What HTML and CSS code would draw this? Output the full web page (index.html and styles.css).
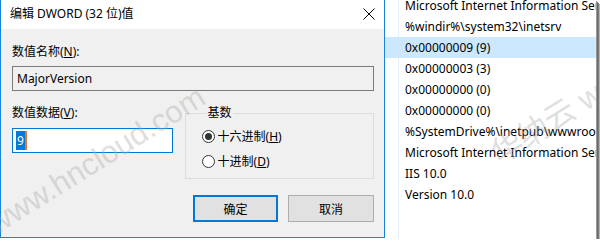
FILE: index.html
```html
<!DOCTYPE html>
<html lang="zh-CN">
<head>
  <meta charset="UTF-8" />
  <title>编辑 DWORD (32 位)值</title>
  <link rel="stylesheet" href="styles.css">
</head>
<body>
  <div class="frame">
    <div class="dialog">
      <div class="titlebar">
        <span class="title">编辑 DWORD (32 位)值</span>
        <svg class="close" width="12" height="12" viewBox="0 0 12 12">
          <path d="M0.5 0.5 L11.5 11.5 M11.5 0.5 L0.5 11.5" stroke="#000" stroke-width="1" fill="none"/>
        </svg>
      </div>
      <div class="content">
        <div class="label">数值名称(<u>N</u>):</div>
        <div class="namebox">MajorVersion</div>

        <div class="datarow">
          <div class="datacol">
            <div class="label">数值数据(<u>V</u>):</div>
            <div class="databox"><span class="sel">9</span><span class="caret"></span></div>
          </div>
          <fieldset class="group">
            <legend>基数</legend>
            <label class="radio"><input type="radio" name="base" checked> 十六进制(<u>H</u>)</label>
            <label class="radio"><input type="radio" name="base"> 十进制(<u>D</u>)</label>
          </fieldset>
        </div>

        <div class="buttons">
          <button class="btn default">确定</button>
          <button class="btn">取消</button>
        </div>
      </div>
    </div>

    <div class="list">
      <div class="row">Microsoft Internet Information Services</div>
      <div class="row">%windir%\system32\inetsrv</div>
      <div class="row selected">0x00000009 (9)</div>
      <div class="row">0x00000003 (3)</div>
      <div class="row">0x00000000 (0)</div>
      <div class="row">0x00000000 (0)</div>
      <div class="row">%SystemDrive%\inetpub\wwwroot</div>
      <div class="row">Microsoft Internet Information Services</div>
      <div class="row">IIS 10.0</div>
      <div class="row">Version 10.0</div>
    </div>

    <div class="watermark left">www.hncloud.com</div>
    <div class="watermark right">华纳云 www.hncloud.com</div>
  </div>
</body>
</html>
```

FILE: styles.css
```css
body {
  margin: 0;
  background: #fff;
  font-family: "Noto Sans", "Noto Sans CJK SC", sans-serif;
  font-size: 12px;
  color: #000;
}

.frame {
  position: relative;
  display: flex;
  width: 596px;
  height: 239px;
  overflow: hidden;
  box-shadow: 1px 1px 0 #9a9a9a, 2px 2px 0 #6a6a6a, 3px 3px 0 #7c7c7c, 4px 4px 0 #b4b4b4;
}

.dialog {
  width: 383px;
  height: 237px;
  border-left: 1px solid #1883d7;
  border-right: 1px solid #1883d7;
  border-bottom: 1px solid #1883d7;
  display: flex;
  flex-direction: column;
  flex-shrink: 0;
}

.titlebar {
  height: 29px;
  background: #fff;
  display: flex;
  align-items: center;
  justify-content: space-between;
  padding: 0 9px 0 9px;
}

.title {
  line-height: 16px;
  margin-top: -1px;
}

.close {
  margin-top: -2px;
}

.content {
  flex: 1;
  background: #f0f0f0;
  padding: 15px 10px 0 11px;
}

.label {
  line-height: 16px;
  height: 16px;
}

u {
  text-decoration: underline;
}

.namebox {
  margin-top: 6px;
  height: 23px;
  border: 1px solid #7a7a7a;
  background: #f0f0f0;
  padding-left: 4px;
  line-height: 23px;
}

.datarow {
  display: flex;
  margin-top: 14px;
}

.datacol {
  width: 162px;
}

.databox {
  margin-top: 7px;
  border: 1px solid #0078d7;
  background: #fff;
  padding: 2px 0 0 3px;
  box-sizing: border-box;
  height: 25px;
  display: flex;
  align-items: flex-start;
}

.sel {
  background: #0078d7;
  color: #fff;
  line-height: 19px;
  padding: 0 1px;
}

.caret {
  width: 2px;
  height: 19px;
  background: #e07a2a;
}

.group {
  margin: 0 0 0 12px;
  padding: 6px 0 0 16px;
  width: 173px;
  height: 66px;
  border: 1px solid #dcdcdc;
  border-radius: 0;
  min-width: 0;
}

.group legend {
  padding: 0 1px;
  margin-left: 5px;
  line-height: 16px;
}

.radio {
  display: flex;
  align-items: center;
  height: 18px;
  margin-bottom: 7px;
}

.radio input {
  appearance: none;
  width: 13px;
  height: 13px;
  margin: 0 3px 0 0;
  border: 1px solid #333;
  border-radius: 50%;
  background: #fff;
  display: grid;
  place-content: center;
}

.radio input:checked::before {
  content: "";
  width: 7px;
  height: 7px;
  border-radius: 50%;
  background: #333;
}

.buttons {
  display: flex;
  justify-content: flex-end;
  gap: 10px;
  margin-top: 16px;
}

.btn {
  width: 86px;
  height: 27px;
  font: inherit;
  color: #000;
  background: #e1e1e1;
  border: 1px solid #adadad;
  padding: 0;
}

.btn.default {
  width: 85px;
  border: 2px solid #0078d7;
}

.list {
  flex: 1;
  background: linear-gradient(to right, transparent 13px, #e6eef8 13px, #e6eef8 14px, transparent 14px), #fff;
  margin-top: -5px;
  height: 244px;
  overflow: hidden;
}

.row {
  height: 21px;
  line-height: 21px;
  padding-left: 20px;
  white-space: nowrap;
  overflow: hidden;
}

.row.selected {
  background: #cce8ff;
}

.watermark {
  position: absolute;
  font-family: "Liberation Sans", sans-serif;
  font-size: 31px;
  line-height: 36px;
  color: rgba(170, 170, 170, 0.4);
  white-space: nowrap;
  transform-origin: left bottom;
  transform: rotate(-32deg);
  pointer-events: none;
}

.watermark.left {
  left: 0;
  top: 206px;
}

.watermark.right {
  left: 504px;
  top: 136px;
}
```
